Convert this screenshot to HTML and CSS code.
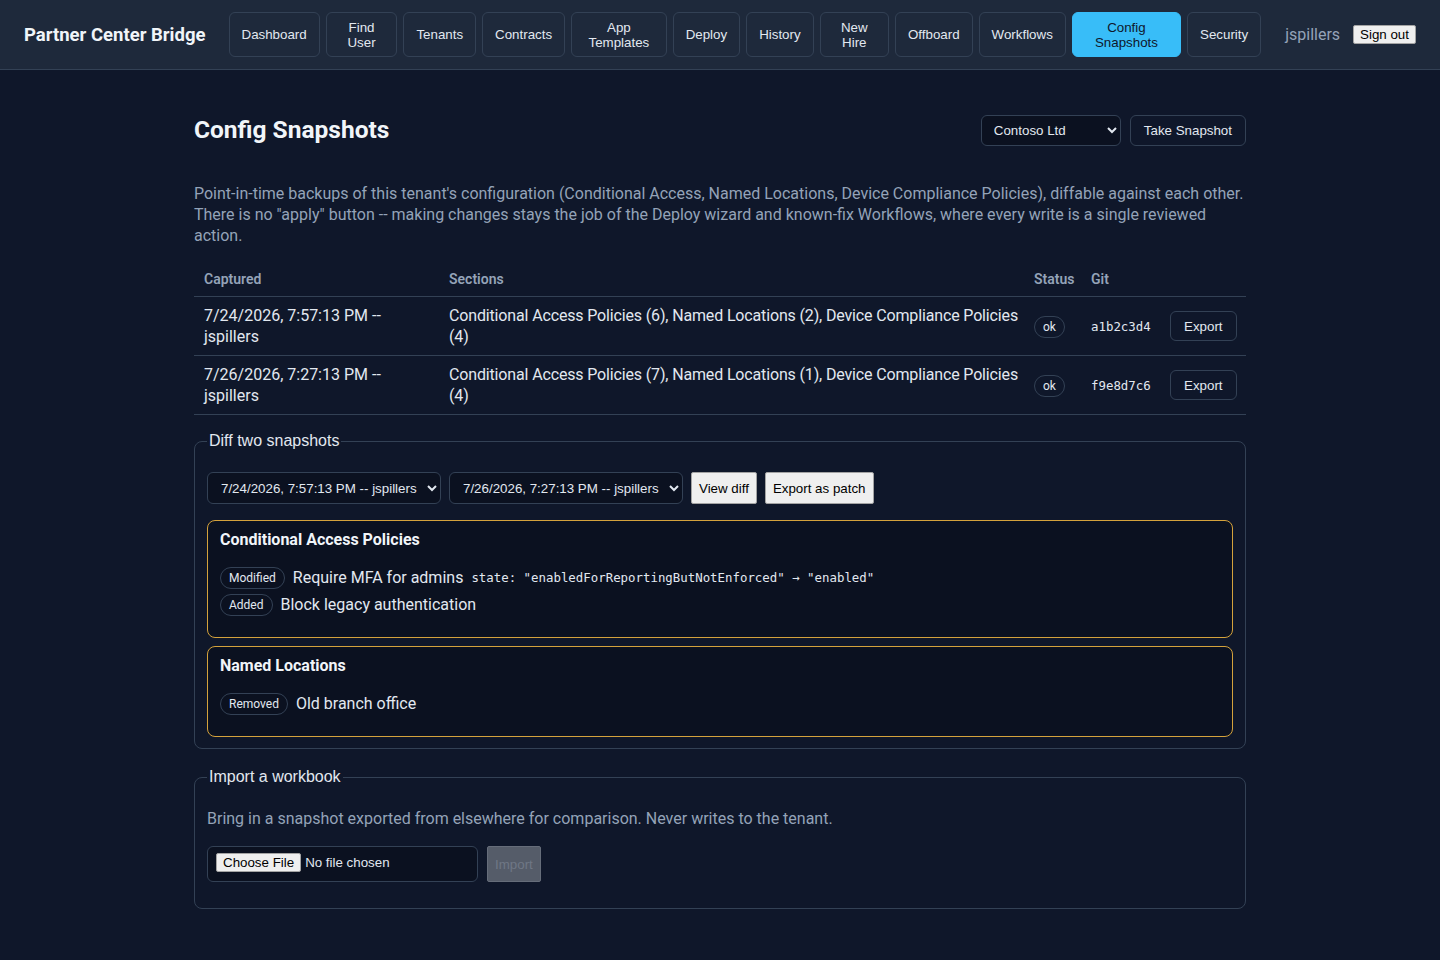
FILE: index.html
```html
<!DOCTYPE html>
<html lang="en">
<head>
    <meta charset="UTF-8">
    <meta name="viewport" content="width=device-width, initial-scale=1.0">
    <title>Config Snapshots - Partner Center Bridge</title>
    <link rel="stylesheet" href="styles.css">
</head>
<body>
    <header class="topbar">
        <div class="brand">Partner Center Bridge</div>
        <nav class="nav">
            <button class="nav-btn">Dashboard</button>
            <button class="nav-btn">Find User</button>
            <button class="nav-btn">Tenants</button>
            <button class="nav-btn">Contracts</button>
            <button class="nav-btn">App Templates</button>
            <button class="nav-btn">Deploy</button>
            <button class="nav-btn">History</button>
            <button class="nav-btn">New Hire</button>
            <button class="nav-btn">Offboard</button>
            <button class="nav-btn">Workflows</button>
            <button class="nav-btn active">Config Snapshots</button>
            <button class="nav-btn">Security</button>
        </nav>
        <div class="user">
            <span class="user-name">jspillers</span>
            <button class="light-btn">Sign out</button>
        </div>
    </header>

    <main class="page">
        <div class="page-head">
            <h1>Config Snapshots</h1>
            <div class="head-actions">
                <select class="dark-select tenant-select">
                    <option>Contoso Ltd</option>
                </select>
                <button class="btn">Take Snapshot</button>
            </div>
        </div>

        <p class="intro">Point-in-time backups of this tenant's configuration (Conditional Access, Named Locations, Device Compliance Policies), diffable against each other. There is no "apply" button -- making changes stays the job of the Deploy wizard and known-fix Workflows, where every write is a single reviewed action.</p>

        <table class="snap-table">
            <colgroup>
                <col class="col-captured">
                <col class="col-sections">
                <col class="col-status">
                <col class="col-git">
                <col>
            </colgroup>
            <thead>
                <tr>
                    <th>Captured</th>
                    <th>Sections</th>
                    <th>Status</th>
                    <th>Git</th>
                    <th></th>
                </tr>
            </thead>
            <tbody>
                <tr>
                    <td>7/24/2026, 7:57:13 PM -- jspillers</td>
                    <td class="sections">Conditional Access Policies (6), Named Locations (2), Device Compliance Policies (4)</td>
                    <td><span class="pill">ok</span></td>
                    <td class="mono">a1b2c3d4</td>
                    <td><button class="btn">Export</button></td>
                </tr>
                <tr>
                    <td>7/26/2026, 7:27:13 PM -- jspillers</td>
                    <td class="sections">Conditional Access Policies (7), Named Locations (1), Device Compliance Policies (4)</td>
                    <td><span class="pill">ok</span></td>
                    <td class="mono">f9e8d7c6</td>
                    <td><button class="btn">Export</button></td>
                </tr>
            </tbody>
        </table>

        <fieldset class="panel">
            <legend>Diff two snapshots</legend>
            <div class="diff-controls">
                <select class="dark-select snap-select">
                    <option>7/24/2026, 7:57:13 PM -- jspillers</option>
                </select>
                <select class="dark-select snap-select">
                    <option>7/26/2026, 7:27:13 PM -- jspillers</option>
                </select>
                <button class="light-btn tall">View diff</button>
                <button class="light-btn tall">Export as patch</button>
            </div>

            <div class="diff-card">
                <h3>Conditional Access Policies</h3>
                <ul class="changes">
                    <li>
                        <span class="pill">Modified</span>
                        <span>Require MFA for admins</span>
                        <code>state: "enabledForReportingButNotEnforced" → "enabled"</code>
                    </li>
                    <li>
                        <span class="pill">Added</span>
                        <span>Block legacy authentication</span>
                    </li>
                </ul>
            </div>

            <div class="diff-card">
                <h3>Named Locations</h3>
                <ul class="changes">
                    <li>
                        <span class="pill">Removed</span>
                        <span>Old branch office</span>
                    </li>
                </ul>
            </div>
        </fieldset>

        <fieldset class="panel">
            <legend>Import a workbook</legend>
            <p class="hint">Bring in a snapshot exported from elsewhere for comparison. Never writes to the tenant.</p>
            <div class="import-row">
                <input type="file" class="file-input" accept=".json">
                <button class="import-btn" disabled>Import</button>
            </div>
        </fieldset>
    </main>
</body>
</html>
```

FILE: styles.css
```css
* {
    box-sizing: border-box;
}
body {
    margin: 0;
    background-color: #0f172a;
    color: #e2e8f0;
    font-family: "Segoe UI", Roboto, "Noto Sans", sans-serif;
    font-size: 16px;
}
button, select, input {
    font-family: "Liberation Sans", Arial, sans-serif;
    font-size: 13.333px;
}

/* top bar */
.topbar {
    display: flex;
    align-items: center;
    padding: 12px 24px;
    background-color: #1e293b;
    border-bottom: 1px solid #334155;
}
.brand {
    flex-shrink: 0;
    font-weight: 700;
    font-size: 18.5px;
    color: #f1f5f9;
}
.nav {
    flex: 1 1 auto;
    min-width: 0;
    display: flex;
    gap: 6px;
    margin-left: 23px;
}
.nav-btn {
    padding: 6px 12px;
    line-height: 15px;
    min-height: 45px;
    background: transparent;
    color: #e2e8f0;
    border: 1px solid #334155;
    border-radius: 6px;
}
.nav-btn.active {
    background-color: #38bdf8;
    border-color: #38bdf8;
    color: #0f172a;
}
.user {
    flex-shrink: 0;
    display: flex;
    align-items: center;
    gap: 13px;
    margin-left: 24px;
}
.user-name {
    color: #94a3b8;
}
.light-btn {
    padding: 1px 6px;
    background-color: #efefef;
    color: #000;
    border: 1px solid #a3a3a3;
    border-radius: 2px;
}
.light-btn.tall {
    height: 32px;
    padding: 0 7px;
}

/* page */
.page {
    max-width: 1100px;
    margin: 0 auto;
    padding: 44px 24px 40px;
}
.page-head {
    display: flex;
    align-items: center;
    justify-content: space-between;
}
.page-head h1 {
    margin: 0;
    font-size: 24.5px;
    line-height: 32px;
    color: #f1f5f9;
}
.head-actions {
    display: flex;
    gap: 9px;
}
.btn {
    height: 30px;
    padding: 0 13px;
    background: transparent;
    color: #e2e8f0;
    border: 1px solid #334155;
    border-radius: 6px;
}
.head-actions .btn {
    height: 31px;
    padding: 0 13px;
}
.dark-select {
    color-scheme: dark;
    height: 31px;
    padding: 0 8px;
    background-color: #0b1120;
    color: #e2e8f0;
    border: 1px solid #334155;
    border-radius: 6px;
}
.tenant-select {
    width: 140px;
}
.intro {
    margin: 37px 0 16px;
    line-height: 21px;
    color: #94a3b8;
}

/* snapshot table */
.snap-table {
    width: 100%;
    table-layout: fixed;
    border-collapse: collapse;
}
.col-captured { width: 245px; }
.col-sections { width: 585px; }
.col-status { width: 57px; }
.col-git { width: 79px; }
.snap-table th {
    padding: 8px 10px;
    text-align: left;
    font-size: 14px;
    font-weight: 600;
    line-height: 18px;
    color: #94a3b8;
    border-bottom: 1px solid #334155;
}
.snap-table td {
    padding: 8px 10px;
    line-height: 21px;
    vertical-align: middle;
    border-bottom: 1px solid #334155;
}
.snap-table td.sections {
    padding-right: 2px;
    letter-spacing: -0.15px;
}
.mono, code {
    font-family: "DejaVu Sans Mono", "Liberation Mono", monospace;
    font-size: 12.4px;
    color: #e2e8f0;
}
.pill {
    display: inline-block;
    padding: 2px 8px;
    font-size: 12px;
    line-height: 16px;
    border: 1px solid #334155;
    border-radius: 999px;
    color: #e2e8f0;
}

/* fieldsets */
.panel {
    margin: 17px 0 0;
    padding: 22px 12px 11px;
    border: 1px solid #334155;
    border-radius: 8px;
}
.panel + .panel {
    margin-top: 19px;
}
.panel legend {
    padding: 0 2px;
    font-family: "Liberation Sans", Arial, sans-serif;
    font-size: 16px;
    color: #e2e8f0;
}
.diff-controls {
    display: flex;
    gap: 8px;
    margin-bottom: 16px;
}
.snap-select {
    width: 234px;
    height: 32px;
    padding: 0 3px 0 9px;
}
.diff-card {
    padding: 8px 12px 19px;
    margin-bottom: 8px;
    background-color: #0b1120;
    border: 1px solid #d4a23c;
    border-radius: 8px;
}
.diff-card:last-child {
    margin-bottom: 0;
}
.diff-card h3 {
    margin: 0;
    font-size: 16px;
    line-height: 21px;
    color: #f1f5f9;
}
.changes {
    list-style: none;
    margin: 14px 0 0;
    padding: 0;
}
.changes li {
    display: flex;
    align-items: center;
    gap: 8px;
    height: 27px;
}
.hint {
    margin: 0 0 17px;
    line-height: 21px;
    color: #94a3b8;
}
.import-row {
    display: flex;
    gap: 9px;
    margin-bottom: 15px;
}
.file-input {
    width: 271px;
    height: 36px;
    padding: 6px 8px;
    background-color: #0b1120;
    color: #e2e8f0;
    border: 1px solid #334155;
    border-radius: 6px;
}
.file-input::file-selector-button {
    padding: 1px 6px;
    margin-right: 4px;
    font-family: "Liberation Sans", Arial, sans-serif;
    font-size: 13.333px;
    background-color: #efefef;
    color: #000;
    border: 1px solid #a3a3a3;
    border-radius: 2px;
}
.import-btn {
    height: 36px;
    padding: 0 7px;
    background-color: #555c69;
    color: #6f7785;
    border: 1px solid #666d7a;
    border-radius: 2px;
}
```
